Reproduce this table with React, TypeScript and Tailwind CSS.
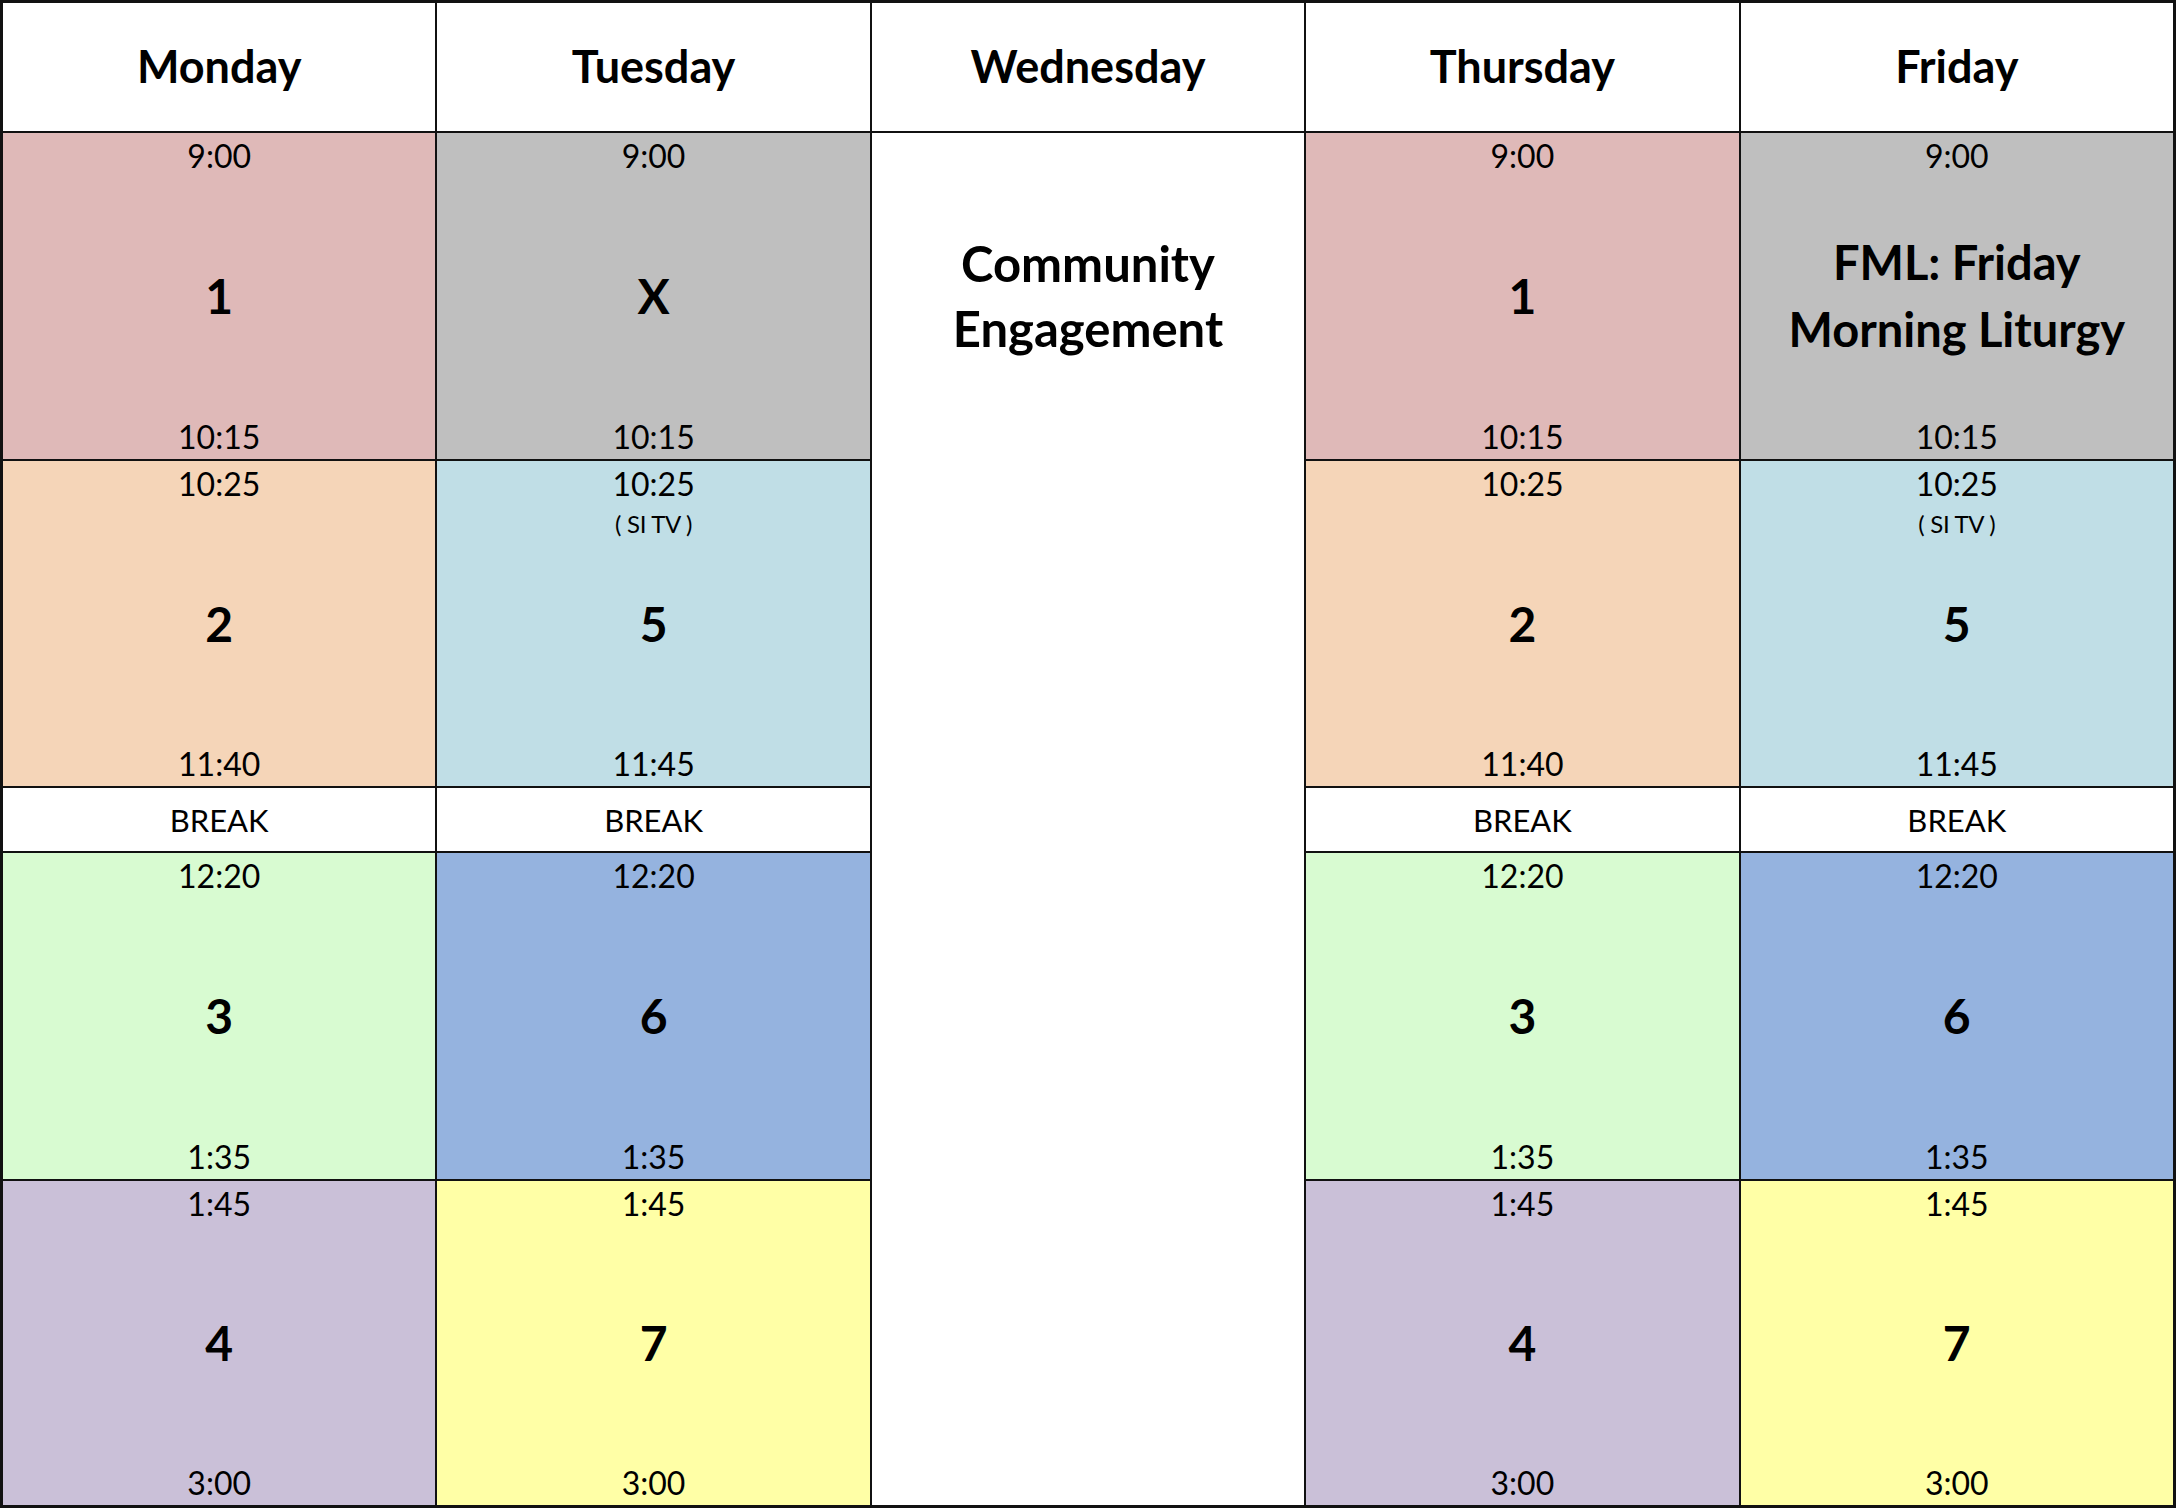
import React from 'react';

type Slot = {
  start: string;
  end: string;
  label: string;
  bg: string;
  note?: string;
  small?: boolean;
};

const days = ['Monday', 'Tuesday', 'Wednesday', 'Thursday', 'Friday'];

// Mon/Thu share one layout, Tue/Fri the other (Fri swaps X for FML)
const monThu: Slot[] = [
  { start: '9:00', end: '10:15', label: '1', bg: 'bg-[#dfb9b8]' },
  { start: '10:25', end: '11:40', label: '2', bg: 'bg-[#f5d5b8]' },
  { start: '12:20', end: '1:35', label: '3', bg: 'bg-[#d8fbd1]' },
  { start: '1:45', end: '3:00', label: '4', bg: 'bg-[#cac0d8]' },
];

const tue: Slot[] = [
  { start: '9:00', end: '10:15', label: 'X', bg: 'bg-[#bfbfbf]' },
  { start: '10:25', end: '11:45', label: '5', bg: 'bg-[#c0dee6]', note: '( SI TV )' },
  { start: '12:20', end: '1:35', label: '6', bg: 'bg-[#95b3df]' },
  { start: '1:45', end: '3:00', label: '7', bg: 'bg-[#ffffa6]' },
];

const fri: Slot[] = [
  { start: '9:00', end: '10:15', label: 'FML: Friday Morning Liturgy', bg: 'bg-[#bfbfbf]', small: true },
  ...tue.slice(1),
];

const columns = [monThu, tue, null, monThu, fri];

const Period: React.FC<{ slot: Slot }> = ({ slot }) => (
  <div className={`grid grid-rows-[1fr_auto_1fr] text-center ${slot.bg}`}>
    <div className="flex flex-col items-center pt-[4px]">
      <span className="text-[32px] leading-[38px]">{slot.start}</span>
      {slot.note && <span className="mt-[7px] text-[24px] leading-[28px] tracking-[-0.3px]">{slot.note}</span>}
    </div>
    {slot.small ? (
      <div className="px-2 text-[47px] font-bold leading-[67px]">
        FML: Friday
        <br />
        Morning Liturgy
      </div>
    ) : (
      <div className="text-[48px] font-bold leading-[56px]">{slot.label}</div>
    )}
    <div className="flex items-end justify-center pb-[3px]">
      <span className="text-[32px] leading-[38px]">{slot.end}</span>
    </div>
  </div>
);

const BreakCell = () => (
  <div className="flex items-center justify-center bg-white text-[31px] leading-[38px]">BREAK</div>
);

export default function App() {
  // build cells row by row; Wednesday spans every row under its header
  const rows: React.ReactNode[] = [];

  days.forEach((d) => (
    rows.push(
      <div key={`h-${d}`} className="flex items-center justify-center bg-white text-[45px] font-bold">
        {d}
      </div>
    )
  ));

  [0, 1, 'break', 2, 3].forEach((r, ri) => {
    columns.forEach((col, ci) => {
      if (!col) {
        if (ri === 0) {
          rows.push(
            <div key="wed" className="row-span-5 flex flex-col bg-white">
              <div className="flex h-[326px] items-center justify-center text-center text-[49px] font-bold leading-[65px]">
                Community
                <br />
                Engagement
              </div>
            </div>
          );
        }
        return;
      }
      if (r === 'break') {
        rows.push(<BreakCell key={`b-${ci}`} />);
      } else {
        rows.push(<Period key={`p-${ci}-${r}`} slot={col[r as number]} />);
      }
    });
  });

  return (
    <div className="min-h-screen bg-white font-['Lato',sans-serif] text-black">
      <div className="grid h-[1508px] w-[2176px] grid-cols-5 grid-rows-[128px_326px_325px_63px_326px_324px] gap-[2px] border-[3px] border-[#111] bg-[#111]">
        {rows}
      </div>
    </div>
  );
}
